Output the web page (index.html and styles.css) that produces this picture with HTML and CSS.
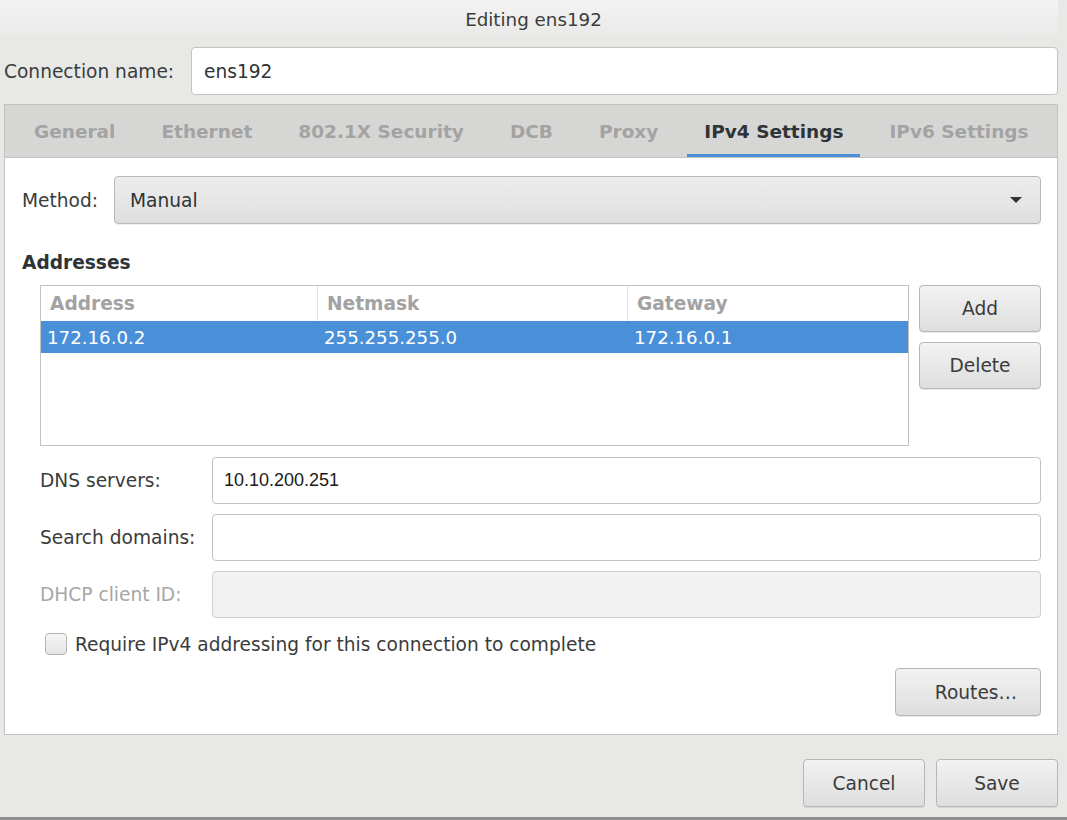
FILE: index.html
```html
<!DOCTYPE html>
<html>
<head>
<meta charset="utf-8">
<link rel="stylesheet" href="styles.css">
</head>
<body>
<div class="window">
  <div class="titlebar">Editing ens192</div>
  <div class="conn-row">
    <label class="conn-label">Connection name:</label>
    <div class="entry conn-entry">ens192</div>
  </div>
  <div class="notebook">
    <div class="tabs">
      <div class="tab">General</div>
      <div class="tab">Ethernet</div>
      <div class="tab">802.1X Security</div>
      <div class="tab">DCB</div>
      <div class="tab">Proxy</div>
      <div class="tab active">IPv4 Settings</div>
      <div class="tab">IPv6 Settings</div>
    </div>
    <div class="page">
      <div class="method-row">
        <label class="method-label">Method:</label>
        <div class="combo">
          <span>Manual</span>
          <svg class="arrow" width="14" height="8" viewBox="0 0 14 8"><path d="M1 1 L13 1 L7 7 Z" fill="#333"/></svg>
        </div>
      </div>
      <div class="section-title">Addresses</div>
      <div class="addr-block">
        <div class="table">
          <div class="thead">
            <div class="th">Address</div>
            <div class="th">Netmask</div>
            <div class="th last">Gateway</div>
          </div>
          <div class="trow selected">
            <div class="td">172.16.0.2</div>
            <div class="td">255.255.255.0</div>
            <div class="td">172.16.0.1</div>
          </div>
        </div>
        <div class="side-buttons">
          <div class="button">Add</div>
          <div class="button">Delete</div>
        </div>
      </div>
      <div class="form">
        <div class="form-row">
          <label class="form-label">DNS servers:</label>
          <div class="entry dns">10.10.200.251</div>
        </div>
        <div class="form-row">
          <label class="form-label">Search domains:</label>
          <div class="entry"></div>
        </div>
        <div class="form-row">
          <label class="form-label disabled">DHCP client ID:</label>
          <div class="entry disabled-entry"></div>
        </div>
      </div>
      <div class="check-row">
        <span class="checkbox"></span>
        <span>Require IPv4 addressing for this connection to complete</span>
      </div>
      <div class="routes-row">
        <div class="button routes">Routes…</div>
      </div>
    </div>
  </div>
  <div class="actions">
    <div class="button action">Cancel</div>
    <div class="button action">Save</div>
  </div>
</div>
</body>
</html>
```

FILE: styles.css
```css
* { box-sizing: border-box; }
html, body { margin: 0; padding: 0; }
body {
  background: #e8e8e7;
  font-family: "DejaVu Sans", "Noto Sans", sans-serif;
  font-size: 18.6px;
  color: #3a3c3c;
}
.window {
  width: 1067px;
  height: 820px;
  background: #e8e8e7;
  border-bottom: 3px solid #8f8f8f;
  padding-right: 9px;
}
.titlebar {
  height: 38px;
  display: flex;
  align-items: center;
  justify-content: center;
  padding-left: 9px;
  background: linear-gradient(#f3f3f3, #e9e9e8);
  color: #3c3c3c;
  font-size: 18.3px;
}
.conn-row {
  display: flex;
  align-items: center;
  margin-top: 9px;
  padding-left: 4px;
}
.conn-label { width: 187px; flex: none; }
.entry {
  flex: 1;
  height: 47px;
  background: #ffffff;
  border: 1px solid #c3c3c2;
  border-radius: 4px;
  display: flex;
  align-items: center;
  padding-left: 12px;
  color: #2e3436;
}
.conn-entry { height: 48px; }
.notebook {
  margin-top: 9px;
  margin-left: 4px;
  border: 1px solid #c2c2c1;
  background: #ffffff;
}
.tabs {
  height: 53px;
  background: #d6d6d5;
  border-bottom: 1px solid #c2c2c1;
  display: flex;
  padding-left: 6px;
}
.tab {
  margin: 0 6px;
  padding: 0 17px;
  display: flex;
  align-items: center;
  font-weight: bold;
  font-size: 18.5px;
  color: #a3a3a3;
  position: relative;
}
.tab.active { color: #2e3436; }
.tab.active::after {
  content: "";
  position: absolute;
  left: 0;
  right: 0;
  bottom: 0;
  height: 3px;
  background: #4a90d9;
}
.page {
  padding: 18px 16px 18px 17px;
  display: flex;
  flex-direction: column;
}
.method-row {
  display: flex;
  align-items: center;
  height: 48px;
}
.method-label { width: 92px; flex: none; }
.combo {
  flex: 1;
  height: 48px;
  border: 1px solid #b9b9b8;
  border-radius: 4px;
  background: linear-gradient(#ededed, #dfdfdf);
  display: flex;
  align-items: center;
  justify-content: space-between;
  padding: 0 17px 0 15px;
  color: #2e3436;
  box-shadow: 0 1px 0 rgba(0,0,0,0.06);
}
.arrow { display: block; }
.section-title {
  margin-top: 28px;
  height: 22px;
  line-height: 22px;
  font-weight: bold;
  color: #2e3436;
}
.addr-block {
  margin-top: 11px;
  margin-left: 18px;
  display: flex;
  gap: 10px;
}
.table {
  width: 869px;
  height: 161px;
  border: 1px solid #c2c2c1;
  background: #ffffff;
}
.thead, .trow {
  display: grid;
  grid-template-columns: 277px 310px 1fr;
}
.thead { height: 35px; }
.th {
  display: flex;
  align-items: center;
  padding-left: 9px;
  font-weight: bold;
  color: #a2a2a2;
  border-right: 1px solid #e2e2e2;
}
.th.last { border-right: none; }
.trow { height: 32px; }
.trow.selected { background: #4a90d9; color: #ffffff; }
.td {
  display: flex;
  align-items: center;
  padding-left: 6px;
  font-size: 18.2px;
}
.side-buttons {
  width: 122px;
  display: flex;
  flex-direction: column;
  gap: 10px;
}
.button {
  height: 47px;
  border: 1px solid #b6b6b4;
  border-radius: 4px;
  background: linear-gradient(#f2f2f2, #dedede);
  display: flex;
  align-items: center;
  justify-content: center;
  color: #3a3c3c;
  box-shadow: 0 1px 0 rgba(0,0,0,0.08);
}
.form {
  margin-top: 11px;
  margin-left: 18px;
  display: flex;
  flex-direction: column;
  gap: 10px;
}
.form-row {
  display: flex;
  align-items: center;
}
.form-label { width: 172px; flex: none; }
.form-label.disabled { color: #a6a6a6; }
.entry.dns {
  font-family: "Liberation Sans", Arial, sans-serif;
  font-size: 18px;
  padding-left: 11px;
  color: #1a1a1a;
}
.disabled-entry { background: #f2f2f2; border-color: #cfcfce; }
.check-row {
  margin-top: 15px;
  margin-left: 23px;
  display: flex;
  align-items: center;
  gap: 8px;
  height: 22px;
}
.checkbox {
  width: 22px;
  height: 22px;
  border: 1px solid #b3b3b2;
  border-radius: 4px;
  background: linear-gradient(#f6f6f6, #e4e4e4);
  flex: none;
}
.routes-row {
  margin-top: 13px;
  display: flex;
  justify-content: flex-end;
}
.button.routes { width: 146px; height: 48px; padding-left: 16px; }
.actions {
  margin-top: 24px;
  display: flex;
  justify-content: flex-end;
  gap: 11px;
}
.button.action { width: 122px; height: 48px; }
```
